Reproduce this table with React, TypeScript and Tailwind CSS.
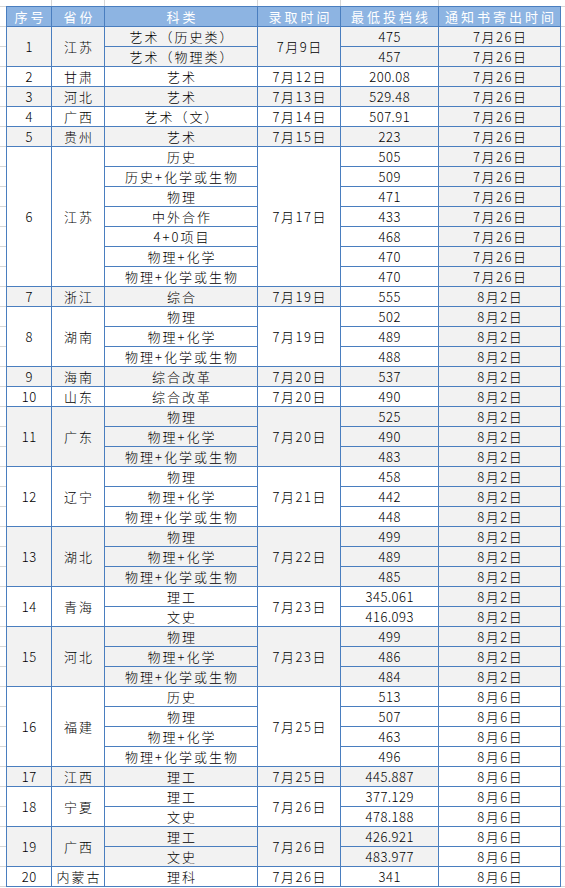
import React from "react";

type Sub = [string, string, string];
type Group = { no: string; prov: string; date: string; subs: Sub[] };

const d726 = "7月26日";
const d82 = "8月2日";
const d86 = "8月6日";

const groups: Group[] = [
  { no: "1", prov: "江苏", date: "7月9日", subs: [["艺术（历史类）", "475", d726], ["艺术（物理类）", "457", d726]] },
  { no: "2", prov: "甘肃", date: "7月12日", subs: [["艺术", "200.08", d726]] },
  { no: "3", prov: "河北", date: "7月13日", subs: [["艺术", "529.48", d726]] },
  { no: "4", prov: "广西", date: "7月14日", subs: [["艺术（文）", "507.91", d726]] },
  { no: "5", prov: "贵州", date: "7月15日", subs: [["艺术", "223", d726]] },
  {
    no: "6",
    prov: "江苏",
    date: "7月17日",
    subs: [
      ["历史", "505", d726],
      ["历史+化学或生物", "509", d726],
      ["物理", "471", d726],
      ["中外合作", "433", d726],
      ["4+0项目", "468", d726],
      ["物理+化学", "470", d726],
      ["物理+化学或生物", "470", d726],
    ],
  },
  { no: "7", prov: "浙江", date: "7月19日", subs: [["综合", "555", d82]] },
  { no: "8", prov: "湖南", date: "7月19日", subs: [["物理", "502", d82], ["物理+化学", "489", d82], ["物理+化学或生物", "488", d82]] },
  { no: "9", prov: "海南", date: "7月20日", subs: [["综合改革", "537", d82]] },
  { no: "10", prov: "山东", date: "7月20日", subs: [["综合改革", "490", d82]] },
  { no: "11", prov: "广东", date: "7月20日", subs: [["物理", "525", d82], ["物理+化学", "490", d82], ["物理+化学或生物", "483", d82]] },
  { no: "12", prov: "辽宁", date: "7月21日", subs: [["物理", "458", d82], ["物理+化学", "442", d82], ["物理+化学或生物", "448", d82]] },
  { no: "13", prov: "湖北", date: "7月22日", subs: [["物理", "499", d82], ["物理+化学", "489", d82], ["物理+化学或生物", "485", d82]] },
  { no: "14", prov: "青海", date: "7月23日", subs: [["理工", "345.061", d82], ["文史", "416.093", d82]] },
  { no: "15", prov: "河北", date: "7月23日", subs: [["物理", "499", d82], ["物理+化学", "486", d82], ["物理+化学或生物", "484", d82]] },
  {
    no: "16",
    prov: "福建",
    date: "7月25日",
    subs: [["历史", "513", d86], ["物理", "507", d86], ["物理+化学", "463", d86], ["物理+化学或生物", "496", d86]],
  },
  { no: "17", prov: "江西", date: "7月25日", subs: [["理工", "445.887", d86]] },
  { no: "18", prov: "宁夏", date: "7月26日", subs: [["理工", "377.129", d86], ["文史", "478.188", d86]] },
  { no: "19", prov: "广西", date: "7月26日", subs: [["理工", "426.921", d86], ["文史", "483.977", d86]] },
  { no: "20", prov: "内蒙古", date: "7月26日", subs: [["理科", "341", d86]] },
];

const cellBase = "border border-[#4a7ebf] p-0 text-center align-middle leading-[19px] whitespace-nowrap";
const cjk = "tracking-[2px] pl-[2px]";
const num = "tracking-[0.5px] pl-[0.5px]";
const dt = "tracking-[1.5px] pl-[1.5px]";
const head = "font-normal tracking-[3px] pl-[3px]";

function bg(gray: boolean) {
  return gray ? "bg-[#f2f2f2]" : "bg-white";
}

export default function App() {
  return (
    <div className="w-[565px] h-[888px] overflow-hidden bg-white bg-[repeating-linear-gradient(to_bottom,#d6d6d6_0px,#d6d6d6_1px,transparent_1px,transparent_20px)] bg-[position:0_6px] font-['Noto_Sans_CJK_SC','Liberation_Sans',sans-serif] font-light text-[13px] text-black">
      <div className="flex h-[6px] pl-[6px] bg-white">
        <div className="w-[46px] border-r border-[#d6d6d6]" />
        <div className="w-[53px] border-r border-[#d6d6d6]" />
        <div className="w-[153px] border-r border-[#d6d6d6]" />
        <div className="w-[83px] border-r border-[#d6d6d6]" />
        <div className="w-[98px] border-r border-[#d6d6d6]" />
      </div>
      <div className="pl-[6px]">
        <table className="table-fixed border-collapse w-[555px]">
          <colgroup>
            <col className="w-[45px]" />
            <col className="w-[53px]" />
            <col className="w-[153px]" />
            <col className="w-[83px]" />
            <col className="w-[98px]" />
            <col className="w-[122px]" />
          </colgroup>
          <thead>
            <tr className="h-[20px] bg-[#8db4e2] text-white">
              <th className={`${cellBase} ${head}`}>序号</th>
              <th className={`${cellBase} ${head}`}>省份</th>
              <th className={`${cellBase} ${head}`}>科类</th>
              <th className={`${cellBase} ${head}`}>录取时间</th>
              <th className={`${cellBase} ${head}`}>最低投档线</th>
              <th className={`${cellBase} ${head}`}>通知书寄出时间</th>
            </tr>
          </thead>
          <tbody>
            {groups.map((g, gi) => {
              const idx = gi + 1;
              const odd = idx % 2 === 1;
              const grayA = odd;
              const grayScore = odd && idx !== 7;
              const grayNotice = idx <= 15;
              const n = g.subs.length;
              return g.subs.map((s, si) => (
                <tr key={`${gi}-${si}`} className="h-[20px]">
                  {si === 0 && (
                    <td rowSpan={n} className={`${cellBase} ${bg(grayA)} ${num}`}>
                      {g.no}
                    </td>
                  )}
                  {si === 0 && (
                    <td rowSpan={n} className={`${cellBase} ${bg(grayA)} ${cjk}`}>
                      {g.prov}
                    </td>
                  )}
                  <td className={`${cellBase} ${bg(grayA)} ${cjk}`}>{s[0]}</td>
                  {si === 0 && (
                    <td rowSpan={n} className={`${cellBase} ${bg(grayA)} ${dt}`}>
                      {g.date}
                    </td>
                  )}
                  <td className={`${cellBase} ${bg(grayScore)} ${num}`}>{s[1]}</td>
                  <td className={`${cellBase} ${bg(grayNotice)} ${dt}`}>{s[2]}</td>
                </tr>
              ));
            })}
          </tbody>
        </table>
      </div>
    </div>
  );
}
